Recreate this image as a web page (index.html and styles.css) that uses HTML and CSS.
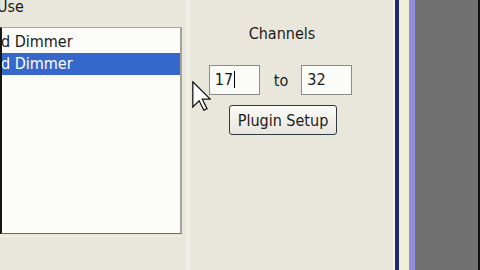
FILE: index.html
```html
<!DOCTYPE html>
<html>
<head>
    <meta name="viewport" content="width=device-width">
    <link rel="stylesheet" href="styles.css">
</head>
<body>
    <div class="window">
        <div class="plugins">
            <div class="caption">Use</div>
            <div class="listbox">
                <div class="row">d Dimmer</div>
                <div class="row selected">d Dimmer</div>
            </div>
            <div class="status"></div>
        </div>
        <div class="channels">
            <div class="label">Channels</div>
            <div class="range">
                <div class="field">17<span class="caret"></span></div>
                <span class="to">to</span>
                <div class="field">32</div>
            </div>
            <button class="setup">Plugin Setup</button>
        </div>
    </div>
    <div class="frame">
        <div class="edge light"></div>
        <div class="edge navy"></div>
        <div class="edge cream"></div>
        <div class="edge lavender"></div>
    </div>
    <div class="desktop"></div>
    <div class="edge black"></div>
    <svg class="pointer" viewBox="0 0 12 19" width="19" height="30">
        <path d="M0.5 0.5 L0.5 16.5 L4.5 12.5 L7.5 18.5 L9.5 17.5 L6.5 11.5 L11.5 11.5 Z" fill="#fff" stroke="#111" stroke-width="0.8" stroke-linejoin="miter"/>
    </svg>
</body>
</html>
```

FILE: styles.css
```css
body {
    margin: 0;
    height: 270px;
    overflow: hidden;
    display: flex;
    background: #e9e7dc;
    color: #1a1a1a;
    font-family: "DejaVu Sans Condensed", "DejaVu Sans", sans-serif;
    font-size: 16px;
    position: relative;
}
.window {width: 393px; display: flex; flex: none}
.plugins {width: 186px; flex: none}
.caption {
    margin: -2px 0 0 -3px;
    line-height: 18px;
    height: 18px;
}
.listbox {
    margin-top: 11px;
    width: 182px;
    height: 207px;
    box-sizing: border-box;
    background: #fcfcf9;
    border-left: 2px solid #151515;
    border-top: 1px solid #a9a9a4;
    border-right: 2px solid #a3a39f;
    border-bottom: 1px solid #6b6a66;
    padding-top: 3px;
    overflow: hidden;
}
.row {
    height: 22px;
    line-height: 22px;
    white-space: nowrap;
    margin-left: -2px;
    padding-left: 1px;
}
.row.selected {background: #3668cc; color: #fff}
.status {
    margin-top: 2px;
    width: 182px;
    border-top: 1px solid #f4f3ec;
}
.channels {
    width: 192px;
    display: flex;
    flex-direction: column;
    align-items: center;
    padding-top: 25px;
    box-sizing: border-box;
    background: linear-gradient(90deg, #efeee7 0, #efeee7 4px, transparent 4px);
}
.label {line-height: 18px}
.range {
    margin: 22px 3px 0 0;
    display: flex;
    align-items: center;
}
.field {
    width: 51px;
    height: 30px;
    box-sizing: border-box;
    border: 1px solid #8c8c88;
    background: #fbfbf8;
    padding-left: 5px;
    line-height: 28px;
}
.caret {
    display: inline-block;
    width: 1px;
    height: 17px;
    background: #000;
    vertical-align: -3px;
    margin-left: 1px;
}
.to {margin: 0 13px 0 14px}
.setup {
    margin: 10px 0 0 2px;
    width: 108px;
    height: 30px;
    border: 1px solid #303844;
    border-radius: 3px;
    background: linear-gradient(#fbfbf8, #e7e5dc);
    font: inherit;
    color: inherit;
    padding: 0;
}
.frame {display: flex; flex: none}
.edge {height: 270px; flex: none}
.light {width: 2px; background: #f4f3ec}
.navy {width: 4px; background: #202a72}
.cream {width: 10px; background: #f0eed6}
.lavender {width: 6px; background: #8e8edc}
.desktop {width: 63px; background: #717171; flex: none}
.black {width: 2px; background: #111}
.pointer {position: absolute; left: 192px; top: 81px}
```
